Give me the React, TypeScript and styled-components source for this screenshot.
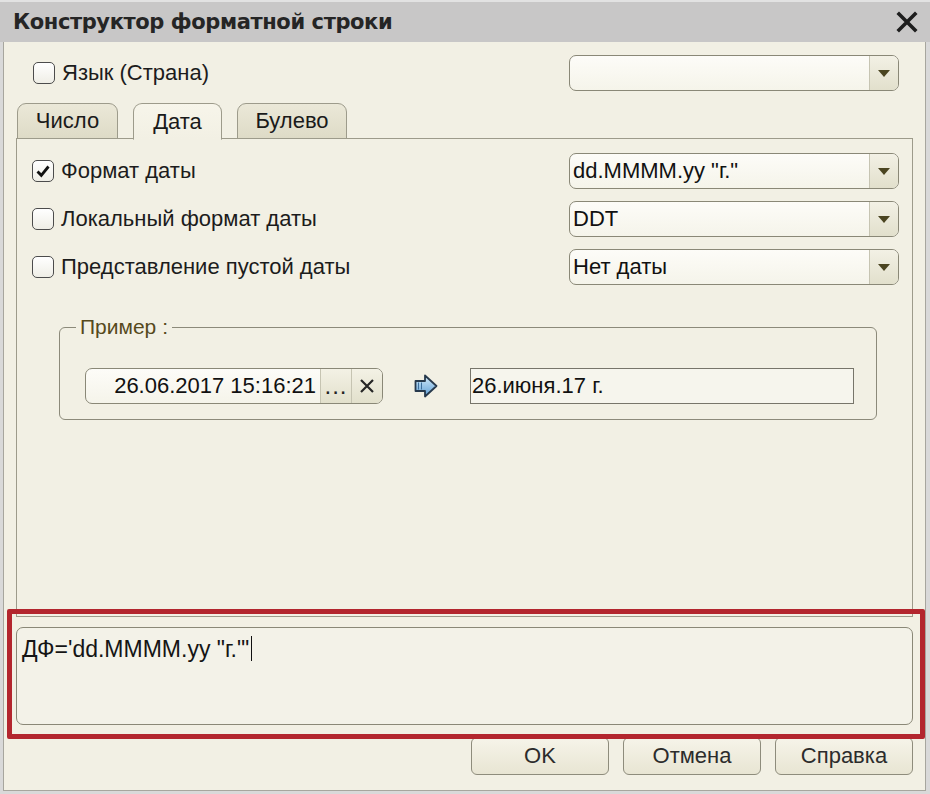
import React from "react";
import styled, { createGlobalStyle } from "styled-components";

const GlobalStyle = createGlobalStyle`
  html, body {
    margin: 0;
    padding: 0;
    background: #d6d6d6;
  }
  body {
    font-family: "Liberation Sans", Arial, sans-serif;
    color: #151515;
  }
`;

const Window = styled.div`
  position: relative;
  width: 930px;
  height: 794px;
  display: flex;
  flex-direction: column;
  background: #d9d9d9;
  overflow: hidden;
`;

const TitleBar = styled.div`
  height: 40px;
  flex-shrink: 0;
  display: flex;
  align-items: center;
  justify-content: space-between;
  padding: 0 12px 0 13px;
  border-top: 2px solid #e2e2e2;
  background: #c8c7c7;
`;

const Title = styled.div`
  font-family: "DejaVu Sans", Verdana, sans-serif;
  font-weight: bold;
  font-size: 21px;
  color: #252525;
  letter-spacing: -0.4px;
`;

const Body = styled.div`
  flex: 1;
  display: flex;
  flex-direction: column;
  margin: 0 4px 3px 3px;
  padding-top: 13px;
  background: #f2f0e4;
  border: 1px solid #a7a69e;
  border-top: none;
`;

const TopRow = styled.div`
  height: 36px;
  display: flex;
  align-items: center;
  justify-content: space-between;
  padding: 0 26px 0 29px;
`;

const CheckLine = styled.label`
  display: flex;
  align-items: center;
  gap: 7px;
  font-size: 22px;
  color: #1c1c1c;
`;

const Box = styled.span`
  width: 22px;
  height: 22px;
  box-sizing: border-box;
  border: 1px solid #4c4c4c;
  border-radius: 5px;
  background: linear-gradient(#ffffff, #efeee6);
  display: inline-flex;
  align-items: center;
  justify-content: center;
`;

const Combo = styled.div`
  width: 330px;
  height: 36px;
  flex-shrink: 0;
  box-sizing: border-box;
  display: flex;
  border: 1px solid #8a8877;
  border-radius: 7px;
  background: linear-gradient(#fdfcf8, #f5f4ea);
  overflow: hidden;
`;

const ComboText = styled.div`
  flex: 1;
  padding-left: 3px;
  font-size: 22px;
  line-height: 34px;
  color: #111;
  white-space: nowrap;
`;

const DropButton = styled.div`
  width: 28px;
  border-left: 1px solid #c6c4b2;
  background: linear-gradient(#f3f1e5, #e2e0cc);
  display: flex;
  align-items: center;
  justify-content: center;
`;

const Triangle = styled.span`
  width: 0;
  height: 0;
  border-left: 6px solid transparent;
  border-right: 6px solid transparent;
  border-top: 7px solid #4b4521;
`;

const TabStrip = styled.div`
  height: 36px;
  display: flex;
  align-items: flex-end;
  gap: 15px;
  margin: 12px 12px -1px;
  padding-left: 1px;
  position: relative;
  z-index: 1;
`;

const Tab = styled.div<{ $active?: boolean; $w: number }>`
  width: ${(p) => p.$w}px;
  height: ${(p) => (p.$active ? "37px" : "36px")};
  box-sizing: border-box;
  display: flex;
  align-items: center;
  justify-content: center;
  font-size: 22px;
  color: #1a1a1a;
  border: 1px solid #9d9b8b;
  border-bottom: ${(p) => (p.$active ? "1px solid #f2f0e4" : "1px solid #9d9b8b")};
  border-radius: 9px 9px 0 0;
  background: ${(p) =>
    p.$active ? "linear-gradient(#f7f5ea, #f2f0e4)" : "linear-gradient(#ebe8d8, #dedbc7)"};
  margin-bottom: ${(p) => (p.$active ? "-1px" : "0")};
`;

const Panel = styled.div`
  height: 479px;
  box-sizing: border-box;
  margin: 0 12px;
  padding: 14px 13px 0 15px;
  border: 1px solid #9d9b8b;
  display: flex;
  flex-direction: column;
  gap: 12px;
`;

const FieldRow = styled.div`
  height: 36px;
  display: flex;
  align-items: center;
  justify-content: space-between;
`;

const Group = styled.fieldset`
  margin: 18px 22px 0 27px;
  padding: 0;
  border: 1px solid #8c8a7a;
  border-radius: 6px;
  min-inline-size: 0;
`;

const GroupLabel = styled.legend`
  margin-left: 16px;
  padding: 0 4px;
  font-size: 21px;
  color: #56491c;
`;

const SampleRow = styled.div`
  display: flex;
  align-items: center;
  padding: 29px 0 15px 25px;
`;

const DateInput = styled.div`
  width: 298px;
  height: 36px;
  flex-shrink: 0;
  box-sizing: border-box;
  display: flex;
  border: 1px solid #8a8877;
  border-radius: 7px;
  background: linear-gradient(#fdfcf8, #f5f4ea);
  overflow: hidden;
`;

const DateText = styled.div`
  flex: 1;
  text-align: right;
  padding-right: 4px;
  font-size: 22px;
  line-height: 34px;
  color: #111;
`;

const SmallButton = styled.div`
  width: 30px;
  border-left: 1px solid #c6c4b2;
  background: linear-gradient(#f3f1e5, #e2e0cc);
  display: flex;
  align-items: center;
  justify-content: center;
  font-size: 24px;
  letter-spacing: 1px;
  line-height: 34px;
  color: #222;
`;

const ArrowIcon = styled.svg`
  margin: 0 32px 0 31px;
  flex-shrink: 0;
`;

const ResultField = styled.div`
  width: 384px;
  height: 36px;
  flex-shrink: 0;
  box-sizing: border-box;
  border: 1px solid #77756a;
  background: #f6f5ed;
  padding-left: 1px;
  font-size: 22px;
  line-height: 34px;
  color: #111;
`;

const TextArea = styled.div`
  height: 98px;
  box-sizing: border-box;
  margin: 10px 12px 0;
  padding: 8px 5px;
  border: 1px solid #8a8877;
  border-radius: 7px;
  background: #f3f2e8;
  font-size: 23px;
  line-height: 26px;
  color: #151515;
  display: flex;
  align-items: flex-start;
`;

const Caret = styled.span`
  display: inline-block;
  width: 0;
  height: 25px;
  border-left: 1.5px solid #111;
  margin-left: 2px;
`;

const ButtonRow = styled.div`
  display: flex;
  justify-content: flex-end;
  gap: 14px;
  margin-top: 12px;
  padding-right: 12px;
`;

const Button = styled.div`
  width: 138px;
  height: 38px;
  box-sizing: border-box;
  border: 1px solid #8e8c7c;
  border-radius: 6px;
  background: linear-gradient(#f6f4e9, #e8e5d3);
  display: flex;
  align-items: center;
  justify-content: center;
  font-size: 22px;
  color: #2c2c2c;
`;

const Highlight = styled.div`
  position: absolute;
  left: 7px;
  top: 609px;
  width: 918px;
  height: 130px;
  box-sizing: border-box;
  border: 5px solid #b3262e;
  border-radius: 2px;
  pointer-events: none;
`;

function Check({ checked, label }: { checked?: boolean; label: string }) {
  return (
    <CheckLine>
      <Box>
        {checked && (
          <svg width="16" height="16" viewBox="0 0 16 16">
            <path d="M2.5 8.5 L6.3 12.3 L13.5 3.5" fill="none" stroke="#111" strokeWidth="2.8" />
          </svg>
        )}
      </Box>
      {label}
    </CheckLine>
  );
}

function Select({ value }: { value: string }) {
  return (
    <Combo>
      <ComboText>{value}</ComboText>
      <DropButton>
        <Triangle />
      </DropButton>
    </Combo>
  );
}

export default function App() {
  return (
    <>
      <GlobalStyle />
      <Window>
        <TitleBar>
          <Title>Конструктор форматной строки</Title>
          <svg width="22" height="22" viewBox="0 0 22 22">
            <path d="M3 3 L19 19 M19 3 L3 19" stroke="#1e1e1e" strokeWidth="3.6" strokeLinecap="square" />
          </svg>
        </TitleBar>
        <Body>
          <TopRow>
            <Check label="Язык (Страна)" />
            <Select value="" />
          </TopRow>
          <TabStrip>
            <Tab $w={101}>Число</Tab>
            <Tab $w={89} $active>
              Дата
            </Tab>
            <Tab $w={110}>Булево</Tab>
          </TabStrip>
          <Panel>
            <FieldRow>
              <Check checked label="Формат даты" />
              <Select value={'dd.MMMM.yy "г."'} />
            </FieldRow>
            <FieldRow>
              <Check label="Локальный формат даты" />
              <Select value="DDT" />
            </FieldRow>
            <FieldRow>
              <Check label="Представление пустой даты" />
              <Select value="Нет даты" />
            </FieldRow>
            <Group>
              <GroupLabel>Пример :</GroupLabel>
              <SampleRow>
                <DateInput>
                  <DateText>26.06.2017 15:16:21</DateText>
                  <SmallButton>...</SmallButton>
                  <SmallButton>
                    <svg width="18" height="18" viewBox="0 0 18 18">
                      <path d="M3 3 L15 15 M15 3 L3 15" stroke="#262626" strokeWidth="2.2" />
                    </svg>
                  </SmallButton>
                </DateInput>
                <ArrowIcon width="24" height="24" viewBox="0 0 24 24">
                  <defs>
                    <linearGradient id="arrowFill" x1="0" y1="0" x2="0" y2="1">
                      <stop offset="0" stopColor="#d4ecfb" />
                      <stop offset="1" stopColor="#5f9fd6" />
                    </linearGradient>
                  </defs>
                  <polygon
                    points="1.5,7 11,7 11,1.5 22.5,12 11,22.5 11,17 1.5,17"
                    fill="url(#arrowFill)"
                    stroke="#27394c"
                    strokeWidth="1.8"
                    strokeLinejoin="round"
                  />
                  <path d="M4.5 8.5 V15.5 M7.5 8.5 V15.5" stroke="#3d6f9c" strokeWidth="1" />
                </ArrowIcon>
                <ResultField>26.июня.17 г.</ResultField>
              </SampleRow>
            </Group>
          </Panel>
          <TextArea>
            {'ДФ=\'dd.MMMM.yy "г."\''}
            <Caret />
          </TextArea>
          <ButtonRow>
            <Button>OK</Button>
            <Button>Отмена</Button>
            <Button>Справка</Button>
          </ButtonRow>
        </Body>
        <Highlight />
      </Window>
    </>
  );
}
